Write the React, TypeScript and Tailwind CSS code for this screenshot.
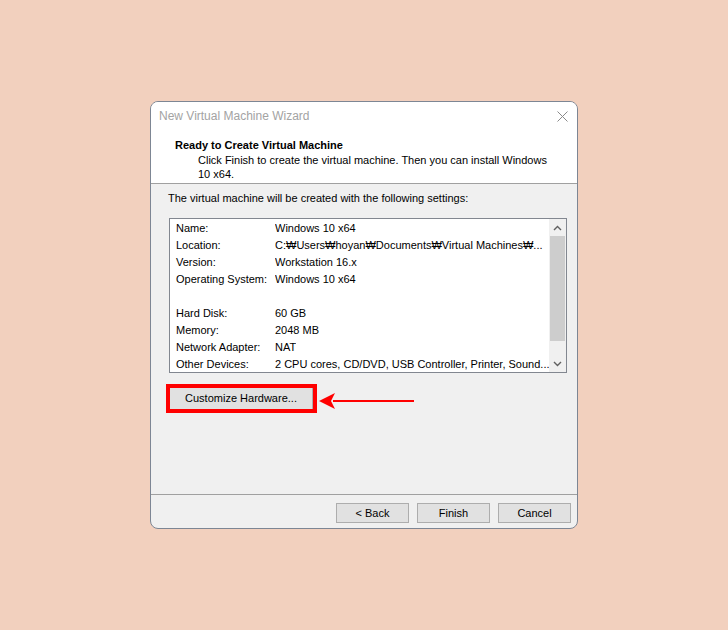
// New Virtual Machine Wizard — final "Ready to Create" step
const SETTINGS: [string, string][] = [
  ['Name:', 'Windows 10 x64'],
  ['Location:', 'C:\u20a9Users\u20a9hoyan\u20a9Documents\u20a9Virtual Machines\u20a9...'],
  ['Version:', 'Workstation 16.x'],
  ['Operating System:', 'Windows 10 x64'],
  ['', ''],
  ['Hard Disk:', '60 GB'],
  ['Memory:', '2048 MB'],
  ['Network Adapter:', 'NAT'],
  ['Other Devices:', '2 CPU cores, CD/DVD, USB Controller, Printer, Sound...'],
];

function WizardButton({ label }: { label: string }) {
  return (
    <button className="w-[73px] h-[20px] bg-[#e1e1e1] border border-[#adadad] text-[11px] leading-none text-black">
      {label}
    </button>
  );
}

function Chevron({ up }: { up?: boolean }) {
  return (
    <svg width="9" height="6" viewBox="0 0 9 6" className="text-[#606060]">
      <path d={up ? 'M1 5 L4.5 1.5 L8 5' : 'M1 1 L4.5 4.5 L8 1'} fill="none" stroke="currentColor" strokeWidth="1.4" />
    </svg>
  );
}

export default function App() {
  return (
    <div className="w-full h-[630px] bg-[#f2d0be] flex items-center justify-center font-['Liberation_Sans',Arial,sans-serif]">
      <div className="w-[428px] h-[428px] flex flex-col rounded-[8px] border border-[#7d8694] bg-[#f0f0f0] overflow-hidden">
        {/* title bar + header */}
        <div className="bg-white">
          <div className="h-[28px] flex items-center justify-between pl-[8px] pr-[9px]">
            <span className="text-[12px] text-[#a3a3a3]">New Virtual Machine Wizard</span>
            <svg width="11" height="11" viewBox="0 0 11 11" className="text-[#8a8a8a]">
              <path d="M0.5 0.5 L10.5 10.5 M10.5 0.5 L0.5 10.5" stroke="currentColor" strokeWidth="1" />
            </svg>
          </div>
          <div className="pt-[8px] pb-[2px] border-b border-[#a0a0a0]">
            <div className="pl-[24px] text-[11px] leading-[14px] font-bold text-black">Ready to Create Virtual Machine</div>
            <div className="mt-[1px] pl-[47px] text-[11px] leading-[14px] text-black">
              Click Finish to create the virtual machine. Then you can install Windows
              <br />
              10 x64.
            </div>
          </div>
        </div>

        {/* body */}
        <div className="flex-1 pt-[7px]">
          <div className="pl-[17px] text-[11px] leading-[14px] text-black">
            The virtual machine will be created with the following settings:
          </div>
          <div className="mt-[13px] ml-[18px] w-[398px] h-[155px] border border-[#828790] bg-white flex overflow-hidden">
            <div className="flex-1 pt-[1px] pl-[6px] overflow-hidden">
              {SETTINGS.map(([k, v], i) => (
                <div key={i} className="h-[17px] flex items-center text-[11px] text-black whitespace-nowrap">
                  <span className="w-[99px] shrink-0">{k}</span>
                  <span className="overflow-hidden">{v}</span>
                </div>
              ))}
            </div>
            <div className="w-[17px] bg-[#f0f0f0] flex flex-col">
              <div className="h-[17px] flex items-center justify-center">
                <Chevron up />
              </div>
              <div className="h-[105px] mx-[1px] bg-[#cdcdcd]" />
              <div className="flex-1" />
              <div className="h-[17px] flex items-center justify-center">
                <Chevron />
              </div>
            </div>
          </div>

          <div className="mt-[11px] pl-[15px] flex items-start">
            <div className="w-[151px] h-[29px] border-[4px] border-[#ff0000]">
              <div className="h-full flex items-center justify-center bg-[#e1e1e1] border-r border-[#adadad] text-[11px] text-black">
                Customize Hardware...
              </div>
            </div>
            <svg width="96" height="18" viewBox="0 0 96 18" className="ml-[2px] mt-[8px]">
              <path d="M14 8 L95 8 L95 10 L14 10 Z" fill="#ff0000" />
              <path d="M0 9 L16 1 L12 9 L16 17 Z" fill="#ff0000" />
            </svg>
          </div>
        </div>

        {/* footer */}
        <div className="h-[34px] border-t border-[#a0a0a0] flex justify-end items-start gap-[8px] pt-[8px] pr-[6px]">
          <WizardButton label="< Back" />
          <WizardButton label="Finish" />
          <WizardButton label="Cancel" />
        </div>
      </div>
    </div>
  );
}
